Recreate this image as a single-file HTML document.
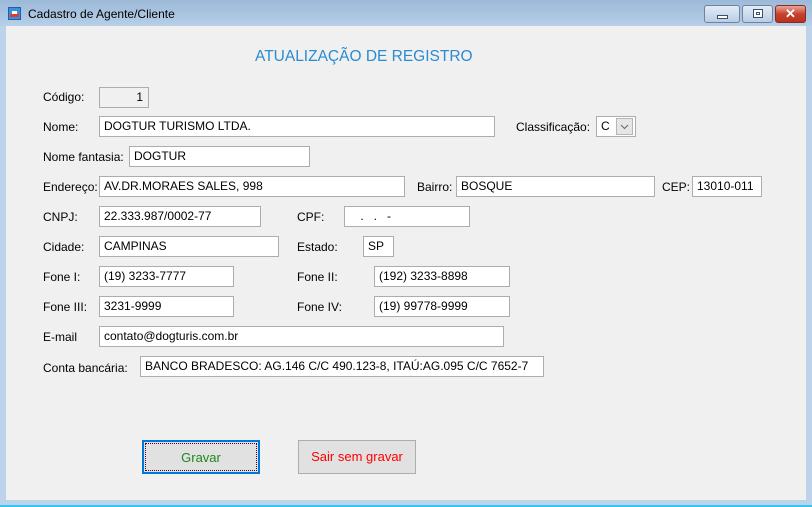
<!DOCTYPE html>
<html><head><meta charset="utf-8">
<style>
*{margin:0;padding:0;box-sizing:border-box}
body{width:812px;height:507px;overflow:hidden;background:#bcd3ea;font-family:"Liberation Sans",Arial,sans-serif;font-size:12px;color:#000;position:relative}
.title{position:absolute;left:0;top:0;width:812px;height:26px;background:linear-gradient(#9cb9d8,#b7cfe8)}
.client{position:absolute;left:6px;top:26px;width:800px;height:474px;background:#f0f0f0}
.a{position:absolute;white-space:nowrap}
.in{position:absolute;background:#fff;border:1px solid #abadb3;height:21px;line-height:19px;padding-left:4px;white-space:nowrap}
.lb{position:absolute;white-space:nowrap;line-height:14px}
.wb{position:absolute;top:5px;height:18px;border:1px solid #6d83a0;border-radius:3px;background:linear-gradient(#e3ecf6,#b9cde4)}
.btn{position:absolute;top:440px;height:34px;background:#e1e1e1;font-size:13px;text-align:center;line-height:32px}
</style></head><body>
<div class="title"></div>
<div class="a" style="left:8px;top:7px;width:13px;height:13px;background:#3d8fd8;border:1px solid #1c5ea8">
 <div style="position:absolute;left:1px;top:6px;width:9px;height:3px;background:#e03a2a"></div>
 <div style="position:absolute;left:3px;top:3px;width:5px;height:3px;background:#fff"></div>
</div>
<div class="a" style="left:28px;top:7px;font-size:12px">Cadastro de Agente/Cliente</div>
<div class="wb" style="left:704px;width:36px"><div style="position:absolute;left:12px;top:9px;width:11px;height:4px;background:#fff;border:1px solid #3b4f6b"></div></div>
<div class="wb" style="left:742px;width:31px"><div style="position:absolute;left:10px;top:3px;width:10px;height:9px;background:#fff;border:1px solid #3b4f6b"><div style="margin:2px;width:4px;height:3px;border:1px solid #3b4f6b"></div></div></div>
<div class="wb" style="left:775px;width:31px;border-color:#8a2a1e;background:linear-gradient(#e8a898,#c8412f 50%,#b8321f)"><div style="position:absolute;left:0;width:29px;top:0;text-align:center;color:#fff;font-weight:bold;font-size:13px;line-height:16px">✕</div></div>
<div class="client"></div>
<div class="a" style="left:255px;top:48px;font-size:15.5px;color:#2a8bd0">ATUALIZAÇÃO DE REGISTRO</div>

<div class="lb" style="left:43px;top:90px">Código:</div>
<div class="in" style="left:99px;top:87px;width:50px;background:#f0f0f0;text-align:right;padding-right:5px">1</div>

<div class="lb" style="left:43px;top:120px">Nome:</div>
<div class="in" style="left:99px;top:116px;width:396px">DOGTUR TURISMO LTDA.</div>
<div class="lb" style="left:516px;top:120px">Classificação:</div>
<div class="in" style="left:596px;top:116px;width:40px">C</div>
<div class="a" style="left:616px;top:118px;width:17px;height:17px;background:#e6e6e6;border:1px solid #b5b5b5">
<svg width="15" height="15" style="position:absolute;left:0;top:0"><path d="M4 6 L7.5 9.5 L11 6" stroke="#666" fill="none" stroke-width="1"/></svg></div>

<div class="lb" style="left:43px;top:150px">Nome fantasia:</div>
<div class="in" style="left:129px;top:146px;width:181px">DOGTUR</div>

<div class="lb" style="left:43px;top:180px">Endereço:</div>
<div class="in" style="left:99px;top:176px;width:306px">AV.DR.MORAES SALES, 998</div>
<div class="lb" style="left:417px;top:180px">Bairro:</div>
<div class="in" style="left:456px;top:176px;width:199px">BOSQUE</div>
<div class="lb" style="left:662px;top:180px">CEP:</div>
<div class="in" style="left:692px;top:176px;width:70px">13010-011</div>

<div class="lb" style="left:43px;top:210px">CNPJ:</div>
<div class="in" style="left:99px;top:206px;width:162px">22.333.987/0002-77</div>
<div class="lb" style="left:297px;top:210px">CPF:</div>
<div class="in" style="left:344px;top:206px;width:126px;padding-left:12px">&nbsp;.&nbsp;&nbsp;&nbsp;.&nbsp;&nbsp;&nbsp;-</div>

<div class="lb" style="left:43px;top:240px">Cidade:</div>
<div class="in" style="left:99px;top:236px;width:180px">CAMPINAS</div>
<div class="lb" style="left:297px;top:240px">Estado:</div>
<div class="in" style="left:363px;top:236px;width:31px">SP</div>

<div class="lb" style="left:43px;top:270px">Fone I:</div>
<div class="in" style="left:99px;top:266px;width:135px">(19) 3233-7777</div>
<div class="lb" style="left:297px;top:270px">Fone II:</div>
<div class="in" style="left:374px;top:266px;width:136px">(192) 3233-8898</div>

<div class="lb" style="left:43px;top:300px">Fone III:</div>
<div class="in" style="left:99px;top:296px;width:135px">3231-9999</div>
<div class="lb" style="left:297px;top:300px">Fone IV:</div>
<div class="in" style="left:374px;top:296px;width:136px">(19) 99778-9999</div>

<div class="lb" style="left:43px;top:330px">E-mail</div>
<div class="in" style="left:99px;top:326px;width:405px">contato@dogturis.com.br</div>

<div class="lb" style="left:43px;top:361px">Conta bancária:</div>
<div class="in" style="left:140px;top:356px;width:404px">BANCO BRADESCO: AG.146 C/C 490.123-8, ITAÚ:AG.095 C/C 7652-7</div>

<div class="btn" style="left:142px;width:118px;border:2px solid #0078d7;color:#1a8a1a"><div style="position:absolute;left:1px;top:1px;right:1px;bottom:1px;border:1px dotted #400040"></div><span style="position:relative;line-height:28px">Gravar</span></div>
<div class="btn" style="left:298px;width:118px;border:1px solid #adadad;color:#f00">Sair sem gravar</div>

<div class="a" style="left:0;top:505px;width:812px;height:2px;background:#2fc8ee"></div>
</body></html>
